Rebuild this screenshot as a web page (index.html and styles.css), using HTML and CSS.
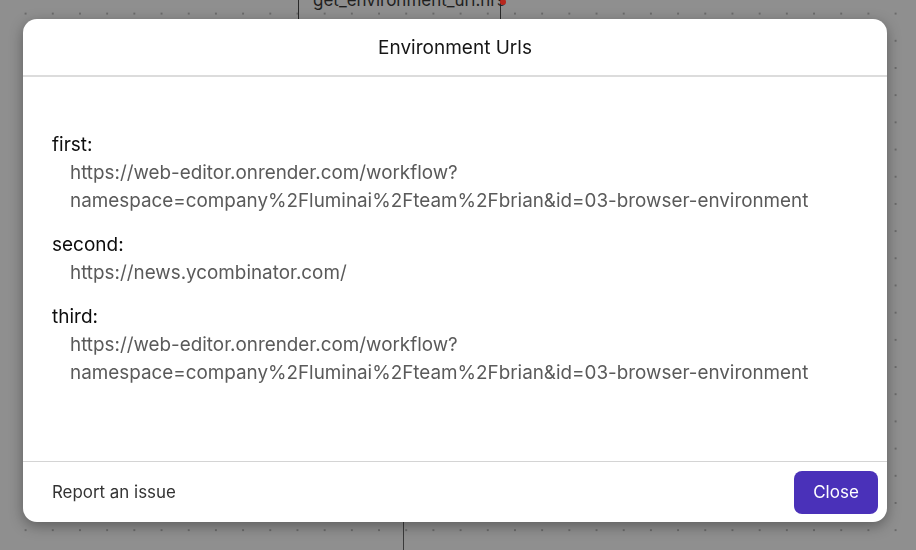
FILE: index.html
```html
<!DOCTYPE html>
<html>
<head>
<meta charset="utf-8">
<link rel="stylesheet" href="styles.css">
</head>
<body>
<div class="canvas">
  <div class="node">
    <span class="node-title">get_environment_url.nrs</span>
    <span class="node-dot"></span>
  </div>
  <div class="edge"></div>
</div>
<div class="overlay">
  <div class="modal">
    <div class="modal-header">Environment Urls</div>
    <div class="modal-body">
      <div class="entry">
        <div class="label">first:</div>
        <div class="url">https://web-editor.onrender.com/workflow?<br>namespace=company%2Fluminai%2Fteam%2Fbrian&amp;id=03-browser-environment</div>
      </div>
      <div class="entry">
        <div class="label">second:</div>
        <div class="url">https://news.ycombinator.com/</div>
      </div>
      <div class="entry">
        <div class="label">third:</div>
        <div class="url">https://web-editor.onrender.com/workflow?<br>namespace=company%2Fluminai%2Fteam%2Fbrian&amp;id=03-browser-environment</div>
      </div>
    </div>
    <div class="modal-footer">
      <span class="report">Report an issue</span>
      <button class="close-btn">Close</button>
    </div>
  </div>
</div>
</body>
</html>
```
FILE: styles.css
```css
html, body {
  margin: 0;
  padding: 0;
  width: 916px;
  height: 550px;
  overflow: hidden;
  font-family: Inter, "Noto Sans", sans-serif;
}
body {
  background-color: #8f8f8f;
  background-image: radial-gradient(circle, #6a6a6a 0.9px, transparent 1.3px);
  background-size: 27.2px 27.2px;
  background-position: 12px 0px;
}
.canvas {
  position: relative;
  width: 916px;
  height: 550px;
}
.node {
  position: absolute;
  left: 298px;
  top: -40px;
  width: 201px;
  height: 120px;
  border-left: 1.5px solid #2a2a2a;
  border-right: 1.5px solid #2a2a2a;
}
.node-title {
  position: absolute;
  left: 14px;
  top: 30px;
  font-size: 17px;
  color: #1f1f1f;
}
.node-dot {
  position: absolute;
  right: -6px;
  top: 39px;
  width: 6px;
  height: 6px;
  border-radius: 50%;
  background: #b8281e;
}
.edge {
  position: absolute;
  left: 403px;
  top: 500px;
  width: 1px;
  height: 60px;
  background: #3a3a3a;
}
.overlay {
  position: fixed;
  inset: 0;
  padding: 19px 0 0 23px;
}
.modal {
  width: 864px;
  height: 503px;
  background: #fff;
  border-radius: 14px;
  box-shadow: 0 4px 14px rgba(0, 0, 0, 0.35);
  display: flex;
  flex-direction: column;
  overflow: hidden;
}
.modal-header {
  height: 56px;
  border-bottom: 2px solid #dcdcdc;
  display: flex;
  align-items: center;
  justify-content: center;
  font-size: 19px;
  color: #161616;
}
.modal-body {
  flex: 1;
  padding: 54px 29px 0;
}
.entry + .entry {
  margin-top: 16px;
}
.label {
  font-size: 19px;
  line-height: 28px;
  color: #0d0d0d;
}
.url {
  font-size: 18.85px;
  line-height: 28px;
  color: #5a5a5a;
  padding-left: 18px;
}
.modal-footer {
  height: 61px;
  border-top: 1px solid #d4d4d4;
  padding: 9px 9px 9px 29px;
  box-sizing: border-box;
  display: flex;
  align-items: center;
  justify-content: space-between;
}
.report {
  font-size: 16.9px;
  color: #333;
}
.close-btn {
  width: 84px;
  height: 43px;
  border: none;
  border-radius: 8px;
  background: #4a31b9;
  color: #fff;
  font-family: Inter, "Noto Sans", sans-serif;
  font-size: 17px;
}
```
